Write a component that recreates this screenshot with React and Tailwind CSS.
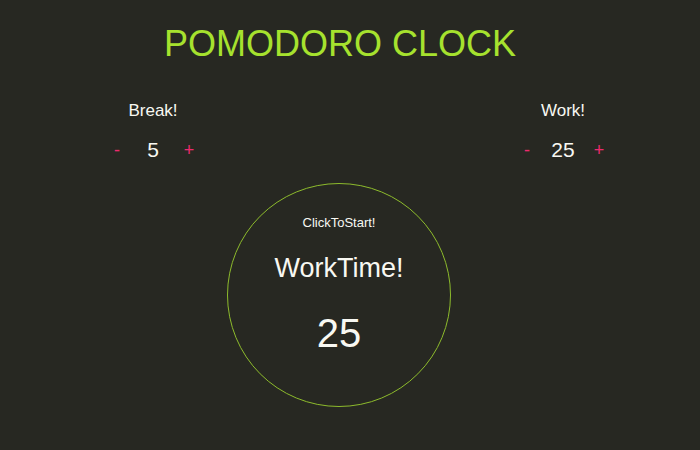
import React, { useState } from "react";

function Setter({ label, value, onDec, onInc }) {
  return (
    <div className="flex w-[120px] flex-col items-center">
      <div className="text-[17px] leading-[20px] text-[#f8f8f2]">{label}</div>
      <div className="mt-[17px] flex items-center">
        <button onClick={onDec} className="w-[36px] text-center text-[18px] leading-[24px] text-[#ec2a6e]">
          -
        </button>
        <span className="w-[36px] text-center text-[21px] leading-[24px] text-[#f8f8f2]">{value}</span>
        <button onClick={onInc} className="w-[36px] text-center text-[18px] leading-[24px] text-[#ec2a6e]">
          +
        </button>
      </div>
    </div>
  );
}

export default function App() {
  const [brk, setBrk] = useState(5);
  const [work, setWork] = useState(25);

  return (
    <div className="h-[450px] w-[700px] overflow-hidden bg-[#272822] font-['Liberation_Sans',Arial,sans-serif]">
      <h1 className="w-[680px] pt-[23px] text-center text-[36px] leading-[41px] text-[#a6e22e]">
        POMODORO CLOCK
      </h1>
      <div className="mt-[37px] flex justify-between pl-[93px] pr-[77px]">
        <Setter
          label="Break!"
          value={brk}
          onDec={() => setBrk((v) => Math.max(1, v - 1))}
          onInc={() => setBrk((v) => v + 1)}
        />
        <Setter
          label="Work!"
          value={work}
          onDec={() => setWork((v) => Math.max(1, v - 1))}
          onInc={() => setWork((v) => v + 1)}
        />
      </div>
      <div className="flex w-[678px] justify-center pt-[21px]">
        <div className="flex h-[224px] w-[224px] cursor-pointer flex-col items-center rounded-full border border-[#8dbb2c]">
          <div className="mt-[31px] text-[13px] leading-[16px] text-[#f8f8f2]">ClickToStart!</div>
          <div className="mt-[21px] text-[27px] leading-[32px] text-[#f8f8f2]">WorkTime!</div>
          <div className="mt-[26px] text-[40px] leading-[46px] text-[#f8f8f2]">{work}</div>
        </div>
      </div>
    </div>
  );
}
